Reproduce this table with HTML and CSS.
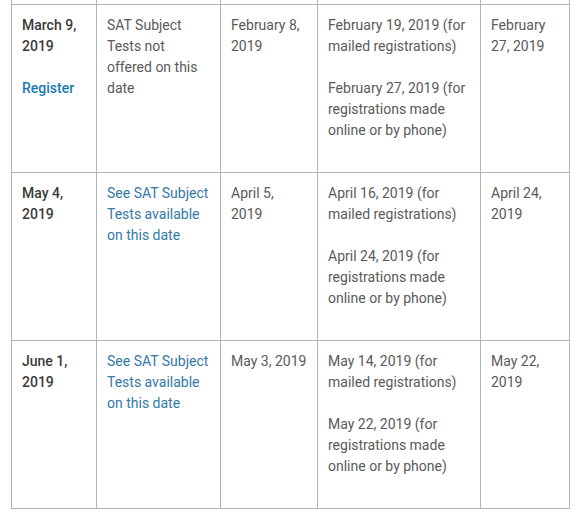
FILE: index.html
```html
<!DOCTYPE html>
<html>
<head>
<meta charset="utf-8">
<link rel="stylesheet" href="styles.css">
</head>
<body>
<table class="sched">
  <colgroup>
    <col class="c1"><col class="c2"><col class="c3"><col class="c4"><col class="c5">
  </colgroup>
  <tr class="cut"><td></td><td></td><td></td><td></td><td></td></tr>
  <tr>
    <td class="date"><p>March 9, 2019</p><p><a class="reg" href="#">Register</a></p></td>
    <td><p>SAT Subject Tests not offered on this date</p></td>
    <td><p>February 8, 2019</p></td>
    <td><p>February 19, 2019 (for mailed registrations)</p><p>February 27, 2019 (for registrations made online or by phone)</p></td>
    <td><p>February 27, 2019</p></td>
  </tr>
  <tr>
    <td class="date"><p>May 4, 2019</p></td>
    <td><p><a class="see" href="#">See SAT Subject Tests available on this date</a></p></td>
    <td><p>April 5, 2019</p></td>
    <td><p>April 16, 2019 (for mailed registrations)</p><p>April 24, 2019 (for registrations made online or by phone)</p></td>
    <td><p>April 24, 2019</p></td>
  </tr>
  <tr>
    <td class="date"><p>June 1, 2019</p></td>
    <td><p><a class="see" href="#">See SAT Subject Tests available on this date</a></p></td>
    <td><p>May 3, 2019</p></td>
    <td><p>May 14, 2019 (for mailed registrations)</p><p>May 22, 2019 (for registrations made online or by phone)</p></td>
    <td><p>May 22, 2019</p></td>
  </tr>
</table>
</body>
</html>
```
FILE: styles.css
```css
html, body {
  margin: 0;
  padding: 0;
  background: #fff;
}
body {
  padding-left: 11px;
  font-family: Roboto, "Liberation Sans", sans-serif;
  font-size: 14px;
  line-height: 21px;
  color: #5a5a5a;
}
.sched {
  border-collapse: collapse;
  table-layout: fixed;
  width: 558px;
}
.c1 { width: 85px; }
.c2 { width: 124px; }
.c3 { width: 97px; }
.c4 { width: 163px; }
.c5 { width: 89px; }
.sched td {
  border: 1px solid #b4b4b4;
  vertical-align: top;
  padding: 10px 10px 0 10px;
  box-sizing: border-box;
  height: 168px;
}
.sched tr.cut td {
  border-top: 0;
  height: 4px;
  padding: 0;
}
.sched p {
  margin: 0 0 21px 0;
}
.sched p:last-child { margin-bottom: 0; }
.date { font-weight: 500; color: #3a3a3a; }
a { text-decoration: none; }
.reg { color: #1b78b4; font-weight: 500; }
.see { color: #3179a6; font-weight: 400; }
```
